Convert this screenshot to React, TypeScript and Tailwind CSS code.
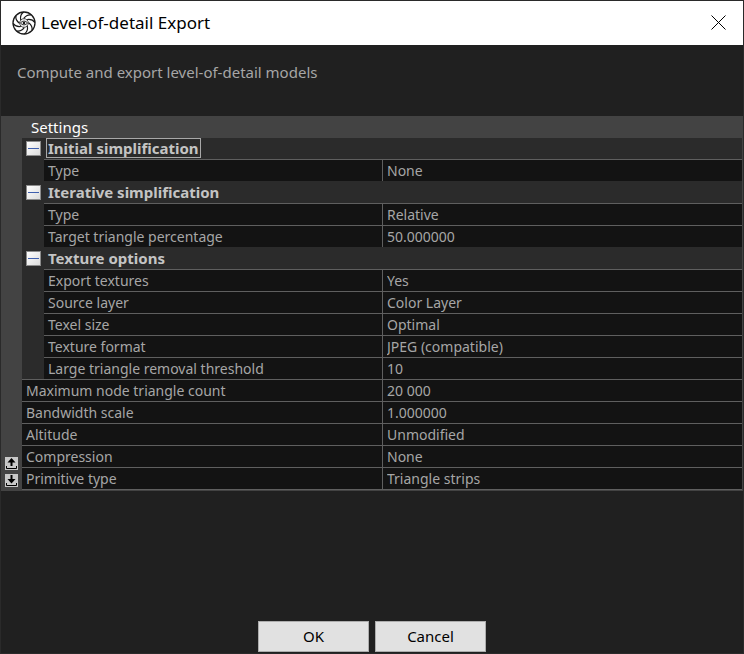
import React, { useState } from 'react';

interface Property {
  id: string;
  label: string;
  value: string;
  options?: string[];
}

interface Category {
  title: string;
  properties: Property[];
}

const categories: Category[] = [
  {
    title: 'Initial simplification',
    properties: [{ id: 'initial-type', label: 'Type', value: 'None', options: ['None'] }],
  },
  {
    title: 'Iterative simplification',
    properties: [
      { id: 'iterative-type', label: 'Type', value: 'Relative', options: ['Relative'] },
      { id: 'target-percentage', label: 'Target triangle percentage', value: '50.000000' },
    ],
  },
  {
    title: 'Texture options',
    properties: [
      { id: 'export-textures', label: 'Export textures', value: 'Yes', options: ['Yes'] },
      { id: 'source-layer', label: 'Source layer', value: 'Color Layer', options: ['Color Layer'] },
      { id: 'texel-size', label: 'Texel size', value: 'Optimal', options: ['Optimal'] },
      {
        id: 'texture-format',
        label: 'Texture format',
        value: 'JPEG (compatible)',
        options: ['JPEG (compatible)'],
      },
      { id: 'removal-threshold', label: 'Large triangle removal threshold', value: '10' },
    ],
  },
];

const general: Property[] = [
  { id: 'max-node-count', label: 'Maximum node triangle count', value: '20 000' },
  { id: 'bandwidth-scale', label: 'Bandwidth scale', value: '1.000000' },
  { id: 'altitude', label: 'Altitude', value: 'Unmodified', options: ['Unmodified'] },
  { id: 'compression', label: 'Compression', value: 'None', options: ['None'] },
  {
    id: 'primitive-type',
    label: 'Primitive type',
    value: 'Triangle strips',
    options: ['Triangle strips'],
  },
];

const bladeAngles = [10, 55, 100, 145, 190, 235, 280, 325];

const AppLogo = () => (
  <svg viewBox="0 0 24 24" className="size-6" fill="none" stroke="#1a1a1a" aria-hidden="true">
    <circle cx="12" cy="12" r="11" strokeWidth="1.3" />
    {bladeAngles.map(angle => (
      <path
        key={angle}
        d="M11 7.5C12.5 4.5 15 2.8 18 2.8"
        strokeWidth="1.2"
        transform={`rotate(${angle} 12 12)`}
      />
    ))}
    <circle cx="12" cy="12" r="4.3" strokeWidth="0.8" />
    <path d="M8.5 12c1.5-2.5 5.5-2.5 7 0c-1.5 2.500-5.5 2.500-7 0z" strokeWidth="0.9" />
    <circle cx="12" cy="12" r="1.3" fill="#1a1a1a" stroke="none" />
  </svg>
);

const PropertyRow = ({ property, nested }: { property: Property; nested?: boolean }) => {
  const fieldClass =
    'block h-[21px] w-full appearance-none bg-transparent pl-1 text-sm leading-[21px] text-[#a6a6a6] outline-none';

  return (
    <tr>
      {nested && <td className="bg-[#2b2b2b]" />}
      <th
        colSpan={nested ? 1 : 2}
        className="border-t border-[#5f5f5f] bg-[#131313] pl-1 text-left text-sm font-normal"
      >
        <label htmlFor={property.id} className="block h-[21px] leading-[21px]">
          {property.label}
        </label>
      </th>
      <td className="border-t border-l border-[#5f5f5f] bg-[#131313]">
        {property.options ? (
          <select id={property.id} defaultValue={property.value} className={fieldClass}>
            {property.options.map(option => (
              <option key={option}>{option}</option>
            ))}
          </select>
        ) : (
          <input id={property.id} type="text" defaultValue={property.value} className={fieldClass} />
        )}
      </td>
    </tr>
  );
};

const CategoryRows = ({ category, first }: { category: Category; first: boolean }) => {
  const [open, setOpen] = useState(true);

  return (
    <tbody className="group">
      <tr className="bg-[#2b2b2b]">
        <td className="border-t border-[#2b2b2b] pl-1 group-first-of-type:border-t-0">
          <button
            type="button"
            aria-label={category.title}
            aria-expanded={open}
            onClick={() => setOpen(!open)}
            className="flex size-[15px] items-center justify-center border border-[#8c8c8c] bg-linear-to-br from-white to-[#dcdcdc]"
          >
            <svg viewBox="0 0 11 11" className="size-[11px]" stroke="#3f5fae" aria-hidden="true">
              <path d="M0 5.5h11" />
              {!open && <path d="M5.5 0v11" />}
            </svg>
          </button>
        </td>
        <th
          colSpan={2}
          className="border-t border-[#2b2b2b] pl-0.5 text-left font-bold text-[#c4c4c4] group-first-of-type:border-t-0"
        >
          <div className="flex h-[21px] items-start">
            <span
              className={
                first
                  ? 'h-5 border border-[#a8a8a8] px-px leading-[18px]'
                  : 'h-5 border border-transparent px-px leading-[18px]'
              }
            >
              {category.title}
            </span>
          </div>
        </th>
      </tr>
      {open &&
        category.properties.map(property => (
          <PropertyRow key={property.id} property={property} nested />
        ))}
    </tbody>
  );
};

const App: React.FC = () => {
  return (
    <div className="flex min-h-screen flex-col border border-[#2a2a2a] bg-[#202020] font-['Noto_Sans',sans-serif] text-[15px] text-[#a6a6a6]">
      <header className="flex h-11 items-center bg-white pr-4 pl-[11px] text-black">
        <AppLogo />
        <h1 className="ml-[5px] flex-1 text-[17px]">Level-of-detail Export</h1>
        <button type="button" aria-label="Close" className="size-4">
          <svg viewBox="0 0 16 16" className="size-4" stroke="#000">
            <path d="M.5.5l14 14M14.5.5l-14 14" />
          </svg>
        </button>
      </header>

      <p className="px-4 pt-4 pb-8 leading-[23px]">Compute and export level-of-detail models</p>

      <section className="border-r border-b border-[#434343]">
        <h2 className="h-[22px] bg-[#434343] pl-[30px] leading-[22px] text-white">Settings</h2>
        <div className="flex">
          <div className="flex w-[21px] flex-col items-center justify-end gap-1 bg-[#434343] pb-[3px]">
            <button type="button" aria-label="Previous" className="size-[13px] bg-[#c8c8c8]">
              <svg viewBox="0 0 13 13" className="size-[13px]" fill="none" stroke="#000">
                <path d="M1.5 9v2.5h10V9" />
                <path d="M6.5 1L2.5 5.5h3V9h2V5.5h3z" fill="#000" stroke="none" />
              </svg>
            </button>
            <button type="button" aria-label="Next" className="size-[13px] bg-[#c8c8c8]">
              <svg viewBox="0 0 13 13" className="size-[13px]" fill="none" stroke="#000">
                <path d="M1.5 9v2.5h10V9" />
                <path d="M6.5 9.5L2.5 5h3V1h2v4h3z" fill="#000" stroke="none" />
              </svg>
            </button>
          </div>
          <table className="flex-1 table-fixed border-separate border-spacing-0 border-b border-[#5f5f5f]">
            <colgroup>
              <col className="w-[22px]" />
              <col />
              <col className="w-1/2" />
            </colgroup>
            {categories.map((category, index) => (
              <CategoryRows key={category.title} category={category} first={index === 0} />
            ))}
            <tbody>
              {general.map(property => (
                <PropertyRow key={property.id} property={property} />
              ))}
            </tbody>
          </table>
        </div>
      </section>

      <footer className="mt-auto flex justify-center gap-1.5 pb-px text-black">
        <button type="button" className="h-[31px] w-[111px] border border-[#adadad] bg-[#e1e1e1]">
          OK
        </button>
        <button type="button" className="h-[31px] w-[111px] border border-[#adadad] bg-[#e1e1e1]">
          Cancel
        </button>
      </footer>
    </div>
  );
};

export default App;
